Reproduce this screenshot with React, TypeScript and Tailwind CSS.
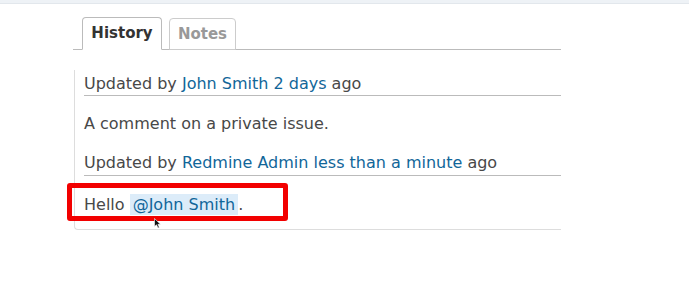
import React from 'react';

const App: React.FC = () => {
  return (
    <div className="w-[689px] h-[290px] bg-white overflow-hidden relative" style={{ fontFamily: '"DejaVu Sans", Verdana, sans-serif' }}>
      {/* top strip */}
      <div className="h-[4px] bg-[#eef2f6] border-b border-[#e2e7ec]" />

      <div className="ml-[73px] w-[488px]">
        {/* Tabs */}
        <div className="mt-[13px] flex gap-[7px] pl-[9px] border-b border-[#bbbbbb] h-[33px] items-end">
          <div className="h-[33px] w-[80px] -mb-px bg-white border border-[#bbbbbb] border-b-white rounded-t-[4px] flex items-center justify-center text-[15px] font-bold text-[#333]">
            History
          </div>
          <div className="h-[32px] w-[67px] -mb-px border border-[#cccccc] rounded-t-[4px] flex items-center justify-center text-[15px] font-bold text-[#999]">
            Notes
          </div>
        </div>

        {/* Journal */}
        <div className="mt-[20px] ml-px border-l border-b border-[#dddddd] rounded-bl-[4px] pl-[9px] pb-[13px] text-[16px] text-[#484848]">
          <div className="pt-[4px] h-[26px] border-b border-[#bbbbbb] leading-[20px]">
            Updated by <span className="text-[#116699]">John Smith</span> <span className="text-[#116699]">2 days</span> ago
          </div>
          <div className="pt-[18px] leading-[20px]">A comment on a private issue.</div>
          <div className="mt-[19px] h-[23px] border-b border-[#bbbbbb] leading-[20px]">
            Updated by <span className="text-[#116699]">Redmine Admin</span> <span className="text-[#116699]">less than a minute</span> ago
          </div>
          <div className="pt-[18px] leading-[22px]">
            Hello <span className="bg-[#dcecf9] text-[#116699] px-[3px] py-[1px]">@John Smith</span>.
          </div>
        </div>
      </div>

      {/* highlight box */}
      <div className="absolute left-[67px] top-[183px] w-[221px] h-[38px] border-[5px] border-[#f20000] rounded-[3px]" />

      {/* cursor */}
      <svg className="absolute left-[154px] top-[218px]" width="8" height="11" viewBox="0 0 8 11">
        <path d="M0.5 0.5 L0.5 8.5 L2.5 6.8 L4 10 L5.3 9.4 L3.9 6.3 L6.5 6.3 Z" fill="#111" stroke="#fff" strokeWidth="0.6" />
      </svg>
    </div>
  );
};

export default App;
